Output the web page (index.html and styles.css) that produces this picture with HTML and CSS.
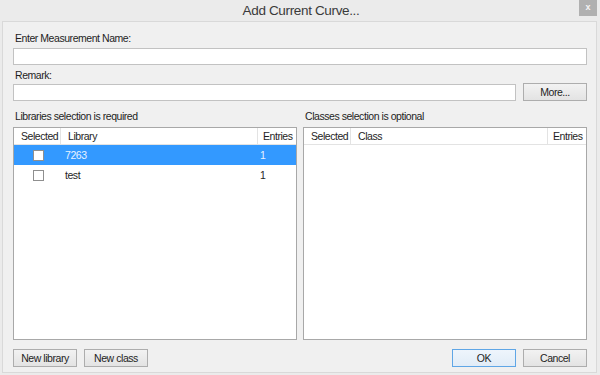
FILE: index.html
```html
<!DOCTYPE html>
<html lang="en">
  <head>
    <meta charset="UTF-8" />
    <title>Add Current Curve...</title>
    <link rel="stylesheet" href="styles.css">
  </head>
  <body>
    <div class="titlebar">
      <span class="title">Add Current Curve...</span>
      <div class="close">x</div>
    </div>

    <div class="client">
      <label class="lbl">Enter Measurement Name:</label>
      <div class="input"></div>

      <label class="lbl remark">Remark:</label>
      <div class="remark-row">
        <div class="input"></div>
        <div class="btn more">More...</div>
      </div>

      <div class="lists">
        <div class="col">
          <div class="lbl">Libraries selection is required</div>
          <div class="listbox">
            <div class="head">
              <div class="c-sel">Selected</div>
              <div class="c-name">Library</div>
              <div class="c-ent">Entries</div>
            </div>
            <div class="row active">
              <div class="c-sel"><span class="chk"></span></div>
              <div class="c-name">7263</div>
              <div class="c-ent">1</div>
            </div>
            <div class="row">
              <div class="c-sel"><span class="chk"></span></div>
              <div class="c-name">test</div>
              <div class="c-ent">1</div>
            </div>
          </div>
        </div>

        <div class="col">
          <div class="lbl">Classes selection is optional</div>
          <div class="listbox">
            <div class="head">
              <div class="c-sel">Selected</div>
              <div class="c-name">Class</div>
              <div class="c-ent">Entries</div>
            </div>
          </div>
        </div>
      </div>

      <div class="footer">
        <div class="btn">New library</div>
        <div class="btn">New class</div>
        <div class="spacer"></div>
        <div class="btn ok">OK</div>
        <div class="btn">Cancel</div>
      </div>
    </div>
  </body>
</html>
```

FILE: styles.css
```css
* {
  margin: 0;
  padding: 0;
  box-sizing: border-box;
}
html,
body {
  width: 600px;
  height: 375px;
  overflow: hidden;
  background: #ebebeb;
  font-family: "Liberation Sans", Arial, sans-serif;
  font-size: 10.5px;
  letter-spacing: -0.45px;
  color: #1e1e1e;
}

.titlebar {
  position: relative;
  height: 21px;
  display: flex;
  justify-content: center;
  align-items: center;
}
.title {
  font-size: 13.5px;
  letter-spacing: -0.35px;
  color: #3a3a3a;
  margin-left: 2px;
}
.close {
  position: absolute;
  top: 0;
  right: 3px;
  width: 18px;
  height: 16px;
  background: #b0b0b0;
  color: #f4f4f4;
  font-size: 9px;
  font-weight: bold;
  text-align: center;
  line-height: 15px;
  letter-spacing: 0;
}

.client {
  height: 352px;
  margin: 0 3px 0 2px;
  border: 1px solid #d9d9d9;
  background: #f0f0f0;
  padding: 9px 9px 0 10px;
  display: flex;
  flex-direction: column;
}

.lbl {
  display: block;
  line-height: 14px;
  height: 14px;
  margin-bottom: 3px;
  padding-left: 2px;
}
.lbl.remark {
  margin-top: 3px;
  margin-bottom: 2px;
}

.input {
  height: 17px;
  background: #fff;
  border: 1px solid #c2c2c2;
}

.remark-row {
  display: flex;
  gap: 7px;
}
.remark-row .input {
  flex: 1;
}

.btn {
  height: 18px;
  width: 64px;
  border: 1px solid #adadad;
  background: linear-gradient(#f2f2f2, #e3e3e3);
  text-align: center;
  line-height: 16px;
  color: #1e1e1e;
}
.btn.more {
  margin-top: -1px;
}
.btn.ok {
  border-color: #5fa6e6;
  background: linear-gradient(#eef5fc, #e1ecf7);
}

.lists {
  display: flex;
  gap: 6px;
  margin-top: 8px;
}
.col {
  flex: 1;
  display: flex;
  flex-direction: column;
}
.col .lbl {
  margin-bottom: 4px;
}
.listbox {
  height: 213px;
  background: #fff;
  border: 1px solid #a8a8a8;
}
.head {
  display: flex;
  height: 17px;
  line-height: 16px;
  border-bottom: 1px solid #e3e3e3;
}
.head > div {
  border-right: 1px solid #e3e3e3;
}
.head .c-ent {
  border-right: none;
}
.c-sel {
  width: 47px;
  padding-left: 7px;
}
.c-name {
  flex: 1;
  padding-left: 7px;
}
.c-ent {
  width: 38px;
  padding-left: 5px;
}

.row {
  display: flex;
  height: 20px;
  line-height: 20px;
}
.row .c-sel {
  display: flex;
  justify-content: center;
  align-items: center;
  padding-left: 2px;
}
.row .c-name {
  padding-left: 4px;
}
.row .c-ent {
  padding-left: 2px;
}
.row.active {
  background: #3399ff;
  color: #e8f2ff;
}
.chk {
  width: 11px;
  height: 11px;
  background: #fff;
  border: 1px solid #8f8f8f;
}

.footer {
  display: flex;
  gap: 7px;
  margin-top: 9px;
}
.spacer {
  flex: 1;
}
```
